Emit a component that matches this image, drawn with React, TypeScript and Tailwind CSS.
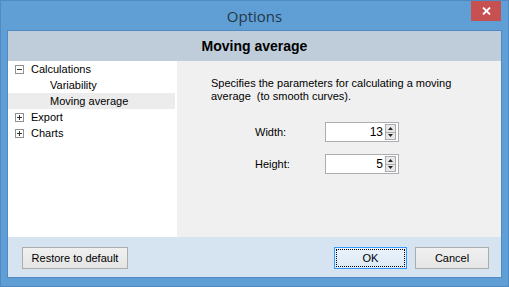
import React from 'react';

// Options dialog (Windows 8 style)
const font = "font-['Liberation_Sans',Arial,sans-serif]";

function ExpandBox({ open }: { open: boolean }) {
  return (
    <span className="relative inline-block w-[9px] h-[9px] border border-[#919191] bg-white">
      <span className="absolute left-[1px] top-[3px] w-[5px] h-[1px] bg-[#333]"></span>
      {!open && <span className="absolute left-[3px] top-[1px] w-[1px] h-[5px] bg-[#333]"></span>}
    </span>
  );
}

function Spinner({ value }: { value: string }) {
  return (
    <div className="w-[74px] h-[20px] border border-[#abadb3] bg-white flex items-center">
      <span className="flex-1 text-right pr-[2px] text-[12px] leading-none text-black">{value}</span>
      <div className="w-[11px] h-[16px] mr-[2px] flex flex-col border border-[#acacac] bg-[#e8e8e8]">
        <div className="flex-1 flex items-center justify-center border-b border-[#acacac]">
          <svg width="5" height="3" viewBox="0 0 5 3"><path d="M0 3 L2.5 0 L5 3 Z" fill="#222" /></svg>
        </div>
        <div className="flex-1 flex items-center justify-center">
          <svg width="5" height="3" viewBox="0 0 5 3"><path d="M0 0 L2.5 3 L5 0 Z" fill="#222" /></svg>
        </div>
      </div>
    </div>
  );
}

export default function App() {
  const tree = [
    { label: 'Calculations', indent: 'pl-[7px]', box: 'open' },
    { label: 'Variability', indent: 'pl-[42px]' },
    { label: 'Moving average', indent: 'pl-[42px]', selected: true },
    { label: 'Export', indent: 'pl-[7px]', box: 'closed' },
    { label: 'Charts', indent: 'pl-[7px]', box: 'closed' },
  ];

  return (
    <div className={`${font} w-[509px] h-[287px] bg-[#5f9fd5] border border-[#4f8bc2] flex flex-col overflow-hidden`}>
      {/* TITLE BAR */}
      <div className="relative h-[29px] flex items-center justify-center">
        <span className="font-['Open_Sans',sans-serif] text-[15px] text-[#263646] mt-[1px]">Options</span>
        <div className="absolute right-[7px] top-[-1px] w-[30px] h-[21px] bg-[#c75050] flex items-center justify-center">
          <svg width="9" height="8" viewBox="0 0 9 8">
            <path d="M1 0.5 L8 7.5 M8 0.5 L1 7.5" stroke="white" strokeWidth="1.8" />
          </svg>
        </div>
      </div>

      {/* INNER PANEL */}
      <div className="mx-[6px] flex-1 flex flex-col border border-[#4f8bc2]">
        <div className="h-[30px] bg-[#bfcddb] flex items-center justify-center">
          <span className="text-[14px] font-bold text-black">Moving average</span>
        </div>

        <div className="flex h-[176px]">
          {/* TREE */}
          <div className="w-[169px] bg-white pr-[2px]">
            {tree.map((row) => (
              <div
                key={row.label}
                className={`h-[16px] flex items-center text-[11px] text-black ${row.indent} ${row.selected ? 'bg-[#ececec]' : ''}`}
              >
                {row.box && <ExpandBox open={row.box === 'open'} />}
                <span className={row.box ? 'ml-[7px]' : ''}>{row.label}</span>
              </div>
            ))}
          </div>

          {/* CONTENT */}
          <div className="flex-1 bg-[#f0f0f0] pl-[34px] pt-[16px]">
            <p className="text-[11px] leading-[13px] text-black w-[262px]">
              Specifies the parameters for calculating a moving average&nbsp; (to smooth curves).
            </p>
            <div className="mt-[19px] flex flex-col gap-[12px]">
              <div className="flex items-center">
                <span className="w-[70px] pl-[44px] box-content text-[11px] text-black">Width:</span>
                <Spinner value="13" />
              </div>
              <div className="flex items-center">
                <span className="w-[70px] pl-[44px] box-content text-[11px] text-black">Height:</span>
                <Spinner value="5" />
              </div>
            </div>
          </div>
        </div>

        {/* BUTTON BAR */}
        <div className="flex-1 bg-[#d6e3f1] flex items-start pt-[10px] pl-[14px] pr-[12px]">
          <button className="w-[106px] h-[22px] border border-[#acacac] bg-gradient-to-b from-[#f0f0f0] to-[#e5e5e5] text-[11px] text-black">
            Restore to default
          </button>
          <div className="flex-1"></div>
          <button className="w-[73px] h-[22px] border border-[#3399ff] bg-gradient-to-b from-[#eaf3fb] to-[#dce9f5] p-[1px]">
            <span className="w-full h-full flex items-center justify-center border border-dotted border-black text-[11px] text-black">OK</span>
          </button>
          <button className="ml-[8px] w-[74px] h-[22px] border border-[#acacac] bg-gradient-to-b from-[#f0f0f0] to-[#e5e5e5] text-[11px] text-black">
            Cancel
          </button>
        </div>
      </div>
      <div className="h-[8px]"></div>
    </div>
  );
}
